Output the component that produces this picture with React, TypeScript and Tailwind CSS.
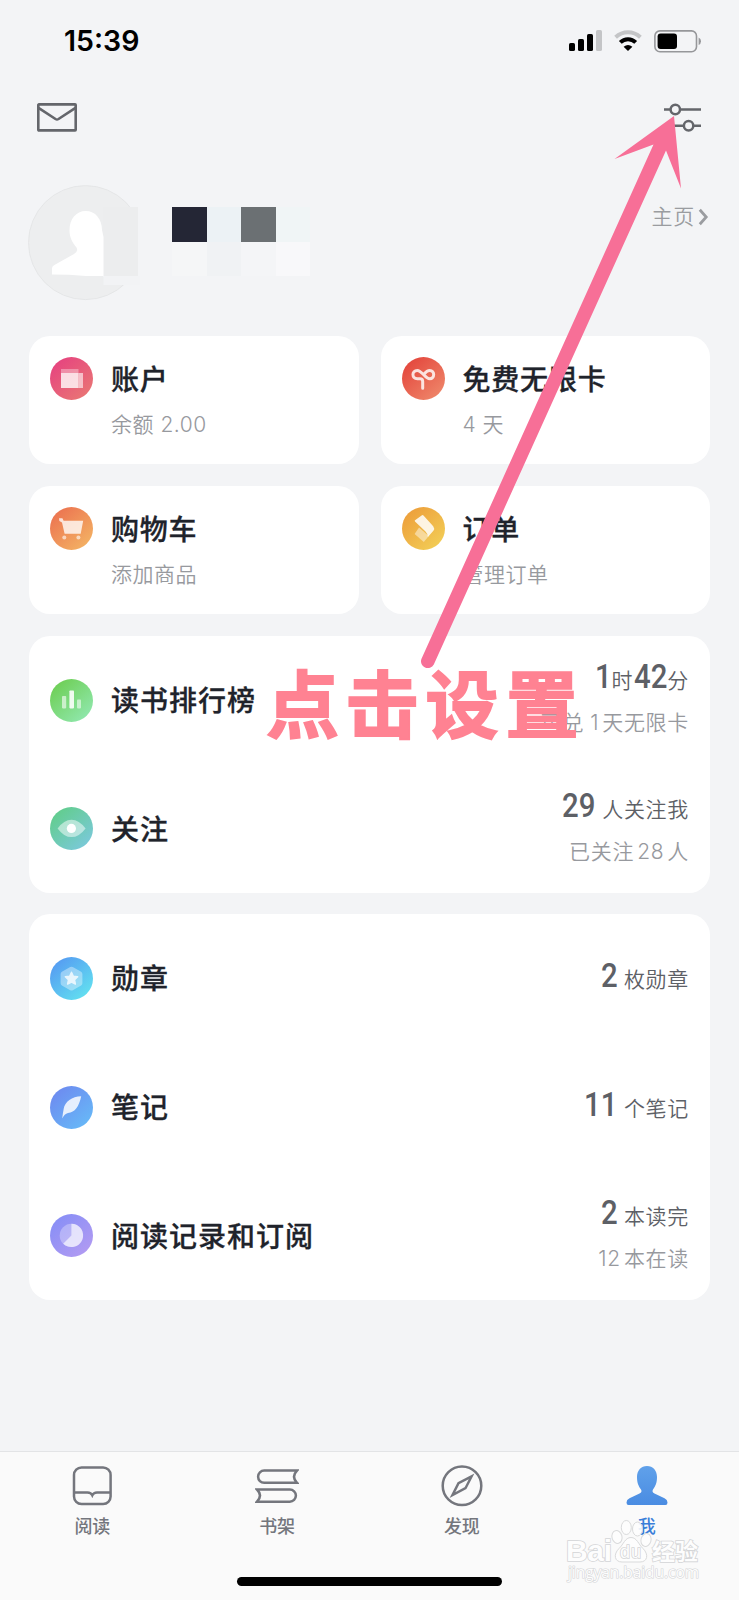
import type { ReactNode } from 'react';

const CJK = "font-['Inter','Noto_Sans_CJK_SC',sans-serif]";

interface GradientIconProps {
  id: string;
  from: string;
  to: string;
  children: ReactNode;
}

function GradientIcon({ id, from, to, children }: GradientIconProps) {
  return (
    <svg width="43" height="43" viewBox="0 0 43 43" className="flex-shrink-0">
      <defs>
        <linearGradient id={id} x1="0.15" y1="0.1" x2="0.85" y2="0.9">
          <stop offset="0" stopColor={from} />
          <stop offset="1" stopColor={to} />
        </linearGradient>
      </defs>
      <circle cx="21.5" cy="21.5" r="21.5" fill={`url(#${id})`} />
      {children}
    </svg>
  );
}

const icons = {
  wallet: (
    <GradientIcon id="g-wallet" from="#e6457f" to="#e97475">
      <rect x="11" y="12" width="17.5" height="4" fill="#fff" opacity="0.35" />
      <rect x="11" y="16" width="17.5" height="15" fill="#fff" opacity="0.8" />
      <rect x="28.5" y="16" width="4.5" height="15" fill="#fff" opacity="0.6" />
    </GradientIcon>
  ),
  infinity: (
    <GradientIcon id="g-infinity" from="#e4483e" to="#ee8468">
      <path
        d="M20.7 31.3V24.4Q20.7 21.8 18 21.8H15.3C9.5 21.8 9.5 13.4 15.3 13.4C20 13.4 23 21.8 27.7 21.8C33 21.8 33 13.4 27.7 13.4C25 13.4 23.2 15.6 21.7 17.4"
        fill="none" stroke="#fff" strokeOpacity="0.82" strokeWidth="3" strokeLinecap="round"
      />
    </GradientIcon>
  ),
  cart: (
    <GradientIcon id="g-cart" from="#ec7551" to="#f3b063">
      <path d="M9 11.2h3.4l1.2 2.6h19.6l-2.5 13H14.6L12 15.5 9.4 14z" fill="#fff" opacity="0.78" />
      <circle cx="14.3" cy="30.5" r="2" fill="#fff" opacity="0.6" />
      <circle cx="28.4" cy="30.5" r="2" fill="#fff" opacity="0.6" />
    </GradientIcon>
  ),
  order: (
    <GradientIcon id="g-order" from="#eda03c" to="#f2cc55">
      <path d="M17 20.5 12.6 27l9.2 8 5-6z" fill="#fff" opacity="0.45" />
      <path d="M13 13.2 20 8.2q.8-.5 1.5.3l9.7 10.8q1.8 2.4.2 4.4l-5.5 6.4q.2-3-2.4-5.6L13 14.5q-.6-.7 0-1.3z" fill="#fff" opacity="0.85" />
    </GradientIcon>
  ),
  ranking: (
    <GradientIcon id="g-ranking" from="#6fcf57" to="#8fe7ab">
      <rect x="12" y="17" width="4.2" height="12.4" rx="0.8" fill="#fff" opacity="0.6" />
      <rect x="19.4" y="11.4" width="4.6" height="18" rx="0.8" fill="#fff" opacity="0.88" />
      <rect x="27" y="20.5" width="4" height="8.9" rx="0.8" fill="#fff" opacity="0.55" />
    </GradientIcon>
  ),
  follow: (
    <GradientIcon id="g-follow" from="#62cd8e" to="#7ac9d8">
      <path d="M7.6 21.4Q14 12.7 21.5 12.7T35.6 21.4Q29 30.1 21.5 30.1T7.6 21.4z" fill="#fff" opacity="0.5" />
      <circle cx="21.4" cy="21.4" r="4.6" fill="#fff" />
    </GradientIcon>
  ),
  medal: (
    <GradientIcon id="g-medal" from="#569df2" to="#62dff0">
      <path d="M20.2 10q1.3-.7 2.6 0l8.3 4.7q1.3.7 1.3 2.2v9.4q0 1.5-1.3 2.2l-8.3 4.7q-1.3.7-2.6 0l-8.3-4.7q-1.3-.7-1.3-2.2v-9.4q0-1.5 1.3-2.2z" fill="#fff" opacity="0.38" />
      <path
        d="m21.5 15.2 1.9 4 4.3.6-3.1 3 .8 4.3-3.9-2-3.9 2 .8-4.3-3.1-3 4.3-.6z"
        fill="#fff" stroke="#fff" strokeWidth="1.4" strokeLinejoin="round" opacity="0.78"
      />
    </GradientIcon>
  ),
  notes: (
    <GradientIcon id="g-notes" from="#6d8cf0" to="#67b7f7">
      <path d="M31.2 10.3C22 10.5 14.8 16 13.7 22.8C13.2 26 12.5 29 12.2 32.4C13.8 29.5 15.5 27.6 18 27C25 26.6 29 20.5 31.2 10.3z" fill="#fff" opacity="0.83" />
    </GradientIcon>
  ),
  history: (
    <GradientIcon id="g-history" from="#898ff6" to="#b09af2">
      <circle cx="21.4" cy="21.4" r="11.7" fill="#fff" opacity="0.3" />
      <path d="M21.4 9.7a11.7 11.7 0 1 1-8.2 20l8.2-8.3z" fill="#fff" opacity="0.62" />
    </GradientIcon>
  ),
};

function StatusBar() {
  return (
    <div className="flex h-[82px] items-center justify-between pl-[64px] pr-[38px]">
      <span className="text-[28.5px] font-semibold leading-none text-black">15:39</span>
      <div className="flex items-center">
        <svg width="33" height="22" viewBox="0 0 33 22">
          <rect x="0" y="13" width="6" height="8" rx="1.6" />
          <rect x="9" y="9" width="6" height="12" rx="1.6" />
          <rect x="18" y="4" width="6" height="17" rx="1.6" />
          <rect x="27" y="0" width="6" height="21" rx="1.6" fill="#c4c5c7" />
        </svg>
        <svg width="28" height="22" viewBox="0 0 28 22" className="ml-[12px]" fill="none" strokeWidth="4">
          <path d="M1.6 7.2Q7 2.2 14 2.2T26.4 7.2" stroke="#c4c5c7" />
          <path d="M6.3 12.4Q9.5 9.2 14 9.2T21.7 12.4" stroke="#000" />
          <path d="M14 21 9.6 16.7Q14 13.2 18.4 16.7z" fill="#000" />
        </svg>
        <svg width="47" height="23" viewBox="0 0 47 23" className="ml-[12px]">
          <rect x="0.9" y="0.9" width="41.6" height="20.8" rx="5" fill="none" stroke="#96979a" strokeWidth="1.6" />
          <rect x="3.6" y="3.6" width="19.4" height="15.4" rx="3" />
          <path d="M44.6 7.5q2.4 1.2 2.4 3.8t-2.4 3.8z" fill="#96979a" />
        </svg>
      </div>
    </div>
  );
}

function TopBar() {
  return (
    <div className="flex h-[72px] items-center justify-between pb-[1px] pl-[37px] pr-[38px]">
      <svg width="40" height="29" viewBox="0 0 40 29" fill="none" stroke="#64666b" strokeWidth="2.6" strokeLinejoin="round">
        <rect x="1.3" y="1.4" width="37.4" height="26" rx="0.6" />
        <path d="M1.5 4.8 18.5 16q1.5.9 3 0L38.5 4.8" />
      </svg>
      <svg width="37" height="30" viewBox="0 0 37 30" fill="none" stroke="#64666b" strokeWidth="2.5">
        <path d="M0 6.5h6.5M16.5 6.5H37M0 22.7h19M30 22.7h7" />
        <circle cx="11.3" cy="6.5" r="4.7" />
        <circle cx="24.6" cy="22.8" r="4.7" />
      </svg>
    </div>
  );
}

function Profile() {
  return (
    <div className="flex h-[182px] items-start pl-[28px] pr-[30px]">
      <svg width="116" height="116" viewBox="0 0 116 116" className="mt-[31px]">
        <circle cx="57.5" cy="57.6" r="57" fill="#edeeef" stroke="#e2e3e5" strokeWidth="0.8" />
        <path d="M75 22h41v70H75z" fill="#f3f4f6" />
        <path d="M75 22h35v69H75z" fill="#ecedee" />
        <path d="M75.5 91H112v9H75.5z" fill="#f2f3f5" />
        <path d="M75.5 91H58q-17-1.4-34-1.4V83q.3-2 2.4-3L46 69q4.6-2.5 2.5-6.5C44 57 41.5 52 41.5 45.5C41.5 34 48 26 57.7 26S74 34 74 45L75.5 52z" fill="#fff" />
      </svg>
      <div className="ml-[28px] mt-[53px] grid grid-cols-[35px_34px_35px_34px] grid-rows-[35px_34px]">
        <div className="bg-[#242635]" />
        <div className="bg-[#ecf2f5]" />
        <div className="bg-[#6b7073]" />
        <div className="bg-[#f0f5f6]" />
        <div className="bg-[#f5f6f7]" />
        <div className="bg-[#f0f2f4]" />
        <div className="bg-[#f4f5f7]" />
        <div className="bg-[#f8f8fa]" />
      </div>
      <div className="ml-auto mt-[47px] flex items-center text-[#9a9ca0]">
        <span className="text-[21px] font-[350] leading-[32px] tracking-[0.7px]">主页</span>
        <svg width="11" height="18" viewBox="0 0 11 18" className="ml-[3px]" fill="none" stroke="currentColor" strokeWidth="2.8">
          <path d="M1.8 1.8 8.2 9l-6.4 7.2" />
        </svg>
      </div>
    </div>
  );
}

function Card({ icon, title, sub }: { icon: ReactNode; title: string; sub: string }) {
  return (
    <div className="flex h-[128px] gap-[18px] rounded-[21px] bg-white pl-[21px] pt-[21px]">
      {icon}
      <div>
        <p className="mt-[2px] text-[28px] font-medium leading-[43px] tracking-[0.8px] text-[#20232b] [-webkit-text-stroke:0.3px]">{title}</p>
        <p className="mt-[7px] text-[21px] font-[350] leading-[32px] tracking-[0.5px] text-[#97999e]">{sub}</p>
      </div>
    </div>
  );
}

// condensed figures, Roboto is squeezed to a DIN-like width
function Num({ children }: { children: string }) {
  const width = children.length === 1 ? 'w-[16px]' : 'w-[34px]';
  return (
    <span className={`inline-flex justify-center font-['Roboto',sans-serif] text-[33px] font-medium leading-none tracking-[0px] ${width}`}>
      <span className="scale-x-[0.89]">{children}</span>
    </span>
  );
}

function Row({ icon, title, main, sub }: { icon: ReactNode; title: string; main: ReactNode; sub?: ReactNode }) {
  return (
    <div className="flex flex-1 items-center pl-[21px] pr-[21px]">
      {icon}
      <span className="ml-[18px] pt-[3px] text-[28px] font-medium leading-[43px] tracking-[1px] text-[#20232b] [-webkit-text-stroke:0.3px]">{title}</span>
      <div className="ml-auto pt-[4px] text-right">
        <p className="text-[21px] font-[350] leading-[42px] tracking-[0.7px] text-[#5d6066]">{main}</p>
        {sub && <p className="text-[21px] font-[350] leading-[42px] tracking-[0.7px] text-[#97999e]">{sub}</p>}
      </div>
    </div>
  );
}

function Tab({ label, active, children }: { label: string; active?: boolean; children: ReactNode }) {
  return (
    <div className={`flex flex-1 flex-col items-center pt-[12px] ${active ? 'text-[#3b7fd9]' : 'text-[#74767d]'}`}>
      <svg width="44" height="44" viewBox="0 0 44 44" fill="none" stroke="currentColor" strokeWidth="2.5">
        {children}
      </svg>
      <span className="mt-[5px] text-[18px] font-medium leading-[28px]">{label}</span>
    </div>
  );
}

function TabBar() {
  return (
    <div className="flex h-[149px] flex-col border-t border-[#e3e4e6] bg-[#fafafa]">
      <div className="flex flex-1">
        <Tab label="阅读">
          <rect x="4" y="3.4" width="36.6" height="36.6" rx="7.5" />
          <path d="M4 28.5H17.5q3.5 0 4.8 2.8Q23.6 28.5 27 28.5h13.3" />
        </Tab>
        <Tab label="书架">
          <path d="M42 6.6H9.2a6 6 0 0 0 0 12.2H42Q36 12.7 42 6.6z" />
          <path d="M2 25.5h32.8a6 6 0 0 1 0 12.2H2Q8 31.6 2 25.5z" />
        </Tab>
        <Tab label="发现">
          <circle cx="22" cy="21.7" r="19.3" />
          <path d="M31.5 12.5 25.5 24.2 12.5 31 18.5 19.2z" />
        </Tab>
        <Tab label="我" active>
          <defs>
            <linearGradient id="g-me" x1="0" y1="0" x2="0" y2="1">
              <stop offset="0" stopColor="#60a1ea" />
              <stop offset="1" stopColor="#4a8ce2" />
            </linearGradient>
          </defs>
          <path
            d="M22 2C28 2 32 6.5 32 13C32 19 30.5 22 28 25.5Q26.5 28 29.5 29.5L39.5 34.2Q42.5 35.8 42.5 38.5Q42.5 41 40.5 41H3.5Q1.5 41 1.5 38.5Q1.5 35.8 4.5 34.2L14.5 29.5Q17.5 28 16 25.5C13.5 22 12 19 12 13C12 6.5 16 2 22 2z"
            fill="url(#g-me)" stroke="none"
          />
        </Tab>
      </div>
      <div className="mx-auto mb-[14px] h-[9px] w-[265px] rounded-full bg-black" />
    </div>
  );
}

function Watermark() {
  return (
    <svg width="144" height="72" viewBox="0 0 144 72" className="absolute left-[562px] top-[1515px]">
      <g fill="#fdfdfd" fillOpacity="0.9" stroke="#d9dadb" strokeWidth="1">
        <ellipse cx="55" cy="22" rx="5" ry="6.5" transform="rotate(-15 55 22)" />
        <ellipse cx="64.3" cy="12.5" rx="5" ry="7" />
        <ellipse cx="75.5" cy="14" rx="5" ry="7" />
        <ellipse cx="84" cy="25" rx="5" ry="6.5" transform="rotate(15 84 25)" />
        <path d="M69 22.5c6 0 7.5 7 12 11 6 6 4.5 13.500-3 13.500H60c-7.500 0-9-7.500-3-13.500 4.500-4 6-11 12-11z" />
      </g>
      <g fill="#fdfdfd" stroke="#d4d5d7" strokeWidth="1.6" paintOrder="stroke">
        <text x="4" y="46" fontSize="30" fontWeight="700" textLength="46" className="font-['Liberation_Sans',sans-serif]">Bai</text>
        <text x="58" y="43" fontSize="18" textLength="21" className="font-['Liberation_Sans',sans-serif]">du</text>
        <text x="90" y="45" fontSize="23" fontWeight="700" textLength="46" className="font-['Noto_Sans_CJK_SC',sans-serif]">经验</text>
        <text x="6" y="63" fontSize="15.5" textLength="131" strokeWidth="1.2" className="font-['Open_Sans',sans-serif]">jingyan.baidu.com</text>
      </g>
    </svg>
  );
}

export default function App() {
  return (
    <div className={`relative flex h-[1600px] w-[739px] flex-col overflow-hidden bg-[#f3f4f6] ${CJK}`}>
      <StatusBar />
      <TopBar />
      <Profile />

      <div className="flex flex-col px-[29px]">
        <div className="grid grid-cols-2 gap-[22px]">
          <Card icon={icons.wallet} title="账户" sub="余额 2.00" />
          <Card icon={icons.infinity} title="免费无限卡" sub="4 天" />
          <Card icon={icons.cart} title="购物车" sub="添加商品" />
          <Card icon={icons.order} title="订单" sub="管理订单" />
        </div>

        <div className="mt-[22px] flex h-[257px] flex-col rounded-[21px] bg-white">
          <Row icon={icons.ranking} title="读书排行榜" main={<><Num>1</Num>时<Num>42</Num>分</>} sub={<>可兑<span className="ml-[6px] mr-[3px]">1</span>天无限卡</>} />
          <Row icon={icons.follow} title="关注" main={<><Num>29</Num> 人关注我</>} sub={<>已关注<span className="mx-[3px]">28</span>人</>} />
        </div>

        <div className="mt-[21px] flex h-[386px] flex-col rounded-[21px] bg-white">
          <Row icon={icons.medal} title="勋章" main={<><Num>2</Num> 枚勋章</>} />
          <Row icon={icons.notes} title="笔记" main={<><Num>11</Num> 个笔记</>} />
          <Row icon={icons.history} title="阅读记录和订阅" main={<><Num>2</Num> 本读完</>} sub={<><span className="mr-[3px]">12</span>本在读</>} />
        </div>
      </div>

      <div className="mt-auto">
        <TabBar />
      </div>

      {/* annotation over the page: arrow to the settings button and its caption */}
      <svg width="739" height="700" viewBox="0 0 739 700" className="absolute left-0 top-0">
        <path d="M674 116 681 188.500 666 150.500 433.800 664.500A6.800 6.800 0 0 1 421.400 659L653.500 144.500 614.500 159z" fill="#f76f97" />
      </svg>
      <p className="absolute left-[266px] top-[651px] whitespace-nowrap text-[73px] font-bold leading-[110px] tracking-[6.8px] text-[#ff8292] [-webkit-text-stroke:1.8px_#ff8292]">点击设置</p>
      <Watermark />
    </div>
  );
}
